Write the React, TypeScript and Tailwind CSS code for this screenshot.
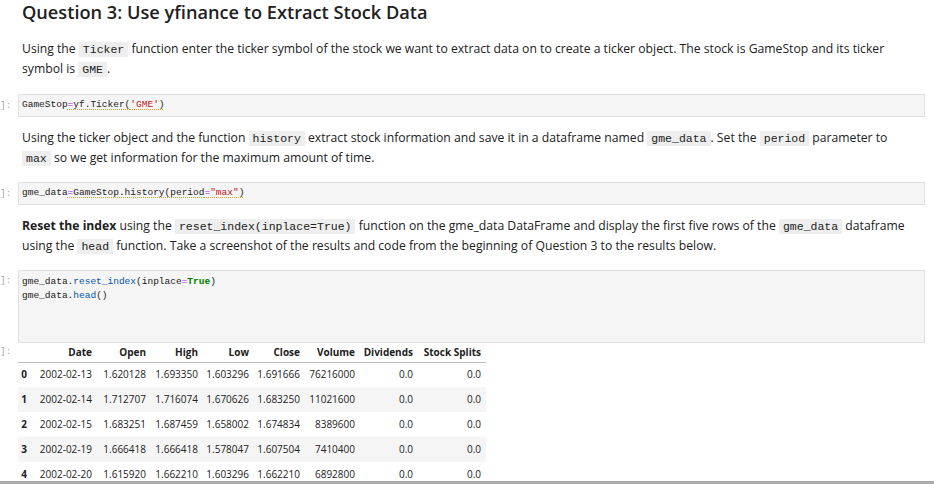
import React from "react";

const mono = "font-['Liberation_Mono','DejaVu_Sans_Mono',monospace]";

function IC({ children }: { children: React.ReactNode }) {
  return (
    <code className="font-['Liberation_Mono','DejaVu_Sans_Mono',monospace] text-[11.5px] leading-none bg-[#eeeeee] px-[4px] py-[1px] text-[#212121]">
      {children}
    </code>
  );
}

function Prompt({ className = "" }: { className?: string }) {
  return (
    <div className={`w-[18px] shrink-0 font-['Liberation_Mono','DejaVu_Sans_Mono',monospace] text-[9.5px] text-[#a8a8a8] ${className}`}>
      ]:
    </div>
  );
}

const rows = [
  ["0", "2002-02-13", "1.620128", "1.693350", "1.603296", "1.691666", "76216000", "0.0", "0.0"],
  ["1", "2002-02-14", "1.712707", "1.716074", "1.670626", "1.683250", "11021600", "0.0", "0.0"],
  ["2", "2002-02-15", "1.683251", "1.687459", "1.658002", "1.674834", "8389600", "0.0", "0.0"],
  ["3", "2002-02-19", "1.666418", "1.666418", "1.578047", "1.607504", "7410400", "0.0", "0.0"],
  ["4", "2002-02-20", "1.615920", "1.662210", "1.603296", "1.662210", "6892800", "0.0", "0.0"],
];

const headers = ["", "Date", "Open", "High", "Low", "Close", "Volume", "Dividends", "Stock Splits"];
const widths = [14, 65, 54, 52, 51, 51, 55, 58, 68];

export default function App() {
  return (
    <div className="relative w-[934px] h-[484px] overflow-hidden bg-white text-[#212121] font-['Open_Sans',sans-serif]">
      <h1 className="pl-[22px] text-[18.2px] font-semibold leading-[24px] text-[#212121]">
        Question 3: Use yfinance to Extract Stock Data
      </h1>

      <div className="flex mt-[15px]">
        <div className="w-[18px] shrink-0" />
        <p className="pl-[4px] text-[12.2px] leading-[20px] pr-[20px]">
          Using the <IC>Ticker</IC> function enter the ticker symbol of the stock we want to extract data on to create a ticker object. The stock is GameStop and its ticker symbol is <IC>GME</IC>.
        </p>
      </div>

      <div className="flex mt-[15px]">
        <Prompt className="leading-[23px]" />
        <div className={`w-[907px] h-[23px] border border-[#e0e0e0] bg-[#f5f5f5] pl-[3px] flex items-center ${mono} text-[9.5px] text-[#212121]`}>
          <span>
            GameStop
            <span className="underline decoration-dotted decoration-[#e0a030] underline-offset-2">
              <span className="text-[#aa22ff]">=</span>yf.Ticker(<span className="text-[#ba2121]">'GME'</span>)
            </span>
          </span>
        </div>
      </div>

      <div className="flex mt-[11px]">
        <div className="w-[18px] shrink-0" />
        <p className="pl-[4px] text-[12.2px] leading-[20px] pr-[20px]">
          Using the ticker object and the function <IC>history</IC> extract stock information and save it in a dataframe named <IC>gme_data</IC>. Set the <IC>period</IC> parameter to <IC>max</IC> so we get information for the maximum amount of time.
        </p>
      </div>

      <div className="flex mt-[14px]">
        <Prompt className="leading-[23px]" />
        <div className={`w-[907px] h-[23px] border border-[#e0e0e0] bg-[#f5f5f5] pl-[3px] flex items-center ${mono} text-[9.5px] text-[#212121]`}>
          <span>
            gme_data
            <span className="underline decoration-dotted decoration-[#e0a030] underline-offset-2">
              <span className="text-[#aa22ff]">=</span>GameStop.history(period<span className="text-[#aa22ff]">=</span>
              <span className="text-[#ba2121]">"max"</span>)
            </span>
          </span>
        </div>
      </div>

      <div className="flex mt-[11px]">
        <div className="w-[18px] shrink-0" />
        <p className="pl-[4px] text-[12.2px] leading-[20px] pr-[20px]">
          <b className="font-bold">Reset the index</b> using the <IC>reset_index(inplace=True)</IC> function on the gme_data DataFrame and display the first five rows of the <IC>gme_data</IC> dataframe using the <IC>head</IC> function. Take a screenshot of the results and code from the beginning of Question 3 to the results below.
        </p>
      </div>

      <div className="flex mt-[14px]">
        <Prompt className="pt-[4px] leading-[14px]" />
        <div className={`w-[907px] h-[73px] border border-[#e0e0e0] bg-[#f5f5f5] pl-[3px] pt-[4px] ${mono} text-[9.5px] leading-[14px] text-[#212121]`}>
          <div>
            gme_data.<span className="text-[#0055aa]">reset_index</span>(inplace<span className="text-[#aa22ff]">=</span>
            <span className="text-[#008000] font-bold">True</span>)
          </div>
          <div>
            gme_data.<span className="text-[#0055aa]">head</span>()
          </div>
        </div>
      </div>

      <div className="flex">
        <Prompt className="leading-[17px]" />
        <table className="border-collapse text-[10px] text-[#212121]">
          <thead>
            <tr className="h-[19px] border-b border-[#bdbdbd]">
              {headers.map((h, i) => (
                <th
                  key={i}
                  style={{ width: widths[i] }}
                  className="text-right font-bold pr-[5px] pl-0 align-middle whitespace-nowrap"
                >
                  {h}
                </th>
              ))}
            </tr>
          </thead>
          <tbody>
            {rows.map((r, ri) => (
              <tr key={ri} className={`h-[25px] ${ri % 2 === 1 ? "bg-[#f5f5f5]" : "bg-white"}`}>
                {r.map((c, ci) => (
                  <td
                    key={ci}
                    className={`text-right pr-[5px] pl-0 align-middle whitespace-nowrap ${ci === 0 ? "font-bold" : ""}`}
                  >
                    {c}
                  </td>
                ))}
              </tr>
            ))}
          </tbody>
        </table>
      </div>

      <div className="absolute left-0 right-0 bottom-0 h-[3px] bg-[#ababab]" />
    </div>
  );
}
